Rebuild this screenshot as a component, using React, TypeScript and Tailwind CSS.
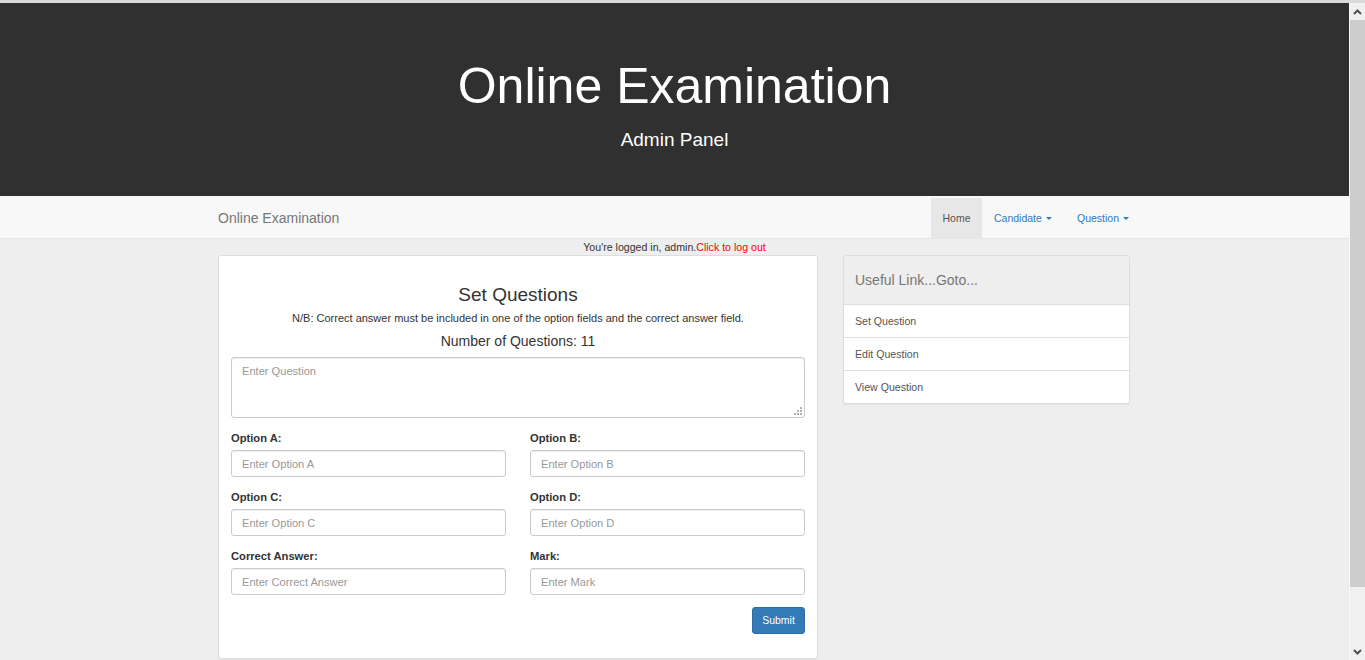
import React from "react";

function Caret() {
  return (
    <span className="ml-[1.5px] inline-block h-0 w-0 align-middle border-t-[3px] border-x-[3px] border-x-transparent border-t-[#337ab7]" />
  );
}

function Field({ label, placeholder }: { label: string; placeholder: string }) {
  return (
    <div className="flex flex-col">
      <label className="text-[11.2px] leading-[15px] font-bold text-[#333]">{label}</label>
      <input
        placeholder={placeholder}
        className="mt-[4px] h-[27px] w-full rounded-[3px] border border-[#ccc] bg-white px-[10px] text-[11.1px] text-[#555] outline-none placeholder:text-[#999] shadow-[inset_0_1px_1px_rgba(0,0,0,0.075)]"
      />
    </div>
  );
}

function ScrollArrow({ up }: { up: boolean }) {
  return (
    <div className="flex h-[17px] items-center justify-center">
      <svg width="9" height="6" viewBox="0 0 9 6">
        {up ? (
          <polyline points="1,5 4.5,1.5 8,5" fill="none" stroke="#505050" strokeWidth="2" />
        ) : (
          <polyline points="1,1 4.5,4.5 8,1" fill="none" stroke="#505050" strokeWidth="2" />
        )}
      </svg>
    </div>
  );
}

export default function App() {
  return (
    <div className="flex h-[660px] flex-col overflow-hidden bg-[#eeeeee] font-['Liberation_Sans',Arial,sans-serif]">
      <div className="h-[3px] bg-[#dadada]" />
      <div className="flex flex-1 min-h-0">
        <main className="flex-1 min-w-0">
          {/* Header */}
          <header className="flex h-[193px] flex-col items-center bg-[#303030] pt-[56px] text-white">
            <h1 className="text-[50px] leading-[55px] font-normal">Online Examination</h1>
            <p className="mt-[12px] text-[19px] leading-[27px]">Admin Panel</p>
          </header>

          {/* Navbar */}
          <nav className="h-[43px] border-b border-[#e7e7e7] bg-[#f8f8f8]">
            <div className="mx-auto flex w-[913px] items-start justify-between pt-[2px]">
              <span className="text-[14px] leading-[40px] text-[#777]">Online Examination</span>
              <ul className="-mr-[10px] flex h-[40px] text-[10.5px] leading-[15px]">
                <li className="flex w-[51px] items-center justify-center bg-[#e7e7e7] text-[#555]">Home</li>
                <li className="flex w-[83px] items-center pl-[12px] text-[#337ab7]">
                  Candidate&nbsp;<Caret />
                </li>
                <li className="flex w-[76px] items-center pl-[12px] text-[#337ab7]">
                  Question&nbsp;<Caret />
                </li>
              </ul>
            </div>
          </nav>

          {/* Logged in line */}
          <div className="text-center text-[10.6px] leading-[16px] text-[#333]">
            You're logged in, admin.<span className="text-[#ff0000]">Click to log out</span>
          </div>

          {/* Content */}
          <div className="mx-auto flex w-[913px] items-start gap-[25px]">
            <section className="w-[600px] rounded-[3px] border border-[#ddd] bg-white px-[12px] pt-[28px] pb-[24px] shadow-[0_1px_1px_rgba(0,0,0,0.05)]">
              <h3 className="text-center text-[19px] leading-[21px] text-[#333]">Set Questions</h3>
              <p className="mt-[6px] text-center text-[11px] leading-[15px] text-[#333]">
                N/B: Correct answer must be included in one of the option fields and the correct answer field.
              </p>
              <p className="mt-[5px] text-center text-[14px] leading-[20px] text-[#333]">Number of Questions: 11</p>
              <div className="relative mt-[6px]">
                <textarea
                  placeholder="Enter Question"
                  className="block h-[61px] w-full resize-none rounded-[3px] border border-[#ccc] bg-white px-[10px] pt-[6px] text-[11.1px] leading-[15px] text-[#555] outline-none placeholder:text-[#999] shadow-[inset_0_1px_1px_rgba(0,0,0,0.075)]"
                />
                <svg className="absolute right-[3px] bottom-[3px]" width="9" height="9" viewBox="0 0 9 9">
                  <rect x="7" y="1" width="2" height="2" fill="#b0b0b0" />
                  <rect x="4" y="4" width="2" height="2" fill="#b0b0b0" />
                  <rect x="7" y="4" width="2" height="2" fill="#b0b0b0" />
                  <rect x="1" y="7" width="2" height="2" fill="#b0b0b0" />
                  <rect x="4" y="7" width="2" height="2" fill="#b0b0b0" />
                  <rect x="7" y="7" width="2" height="2" fill="#b0b0b0" />
                </svg>
              </div>
              <div className="mt-[13px] grid grid-cols-2 gap-x-[24px] gap-y-[13px]">
                <Field label="Option A:" placeholder="Enter Option A" />
                <Field label="Option B:" placeholder="Enter Option B" />
                <Field label="Option C:" placeholder="Enter Option C" />
                <Field label="Option D:" placeholder="Enter Option D" />
                <Field label="Correct Answer:" placeholder="Enter Correct Answer" />
                <Field label="Mark:" placeholder="Enter Mark" />
              </div>
              <div className="mt-[12px] flex justify-end">
                <button className="h-[27px] w-[53px] rounded-[3px] border border-[#2e6da4] bg-[#337ab7] text-[10.5px] text-white">
                  Submit
                </button>
              </div>
            </section>

            <aside className="w-[287px] overflow-hidden rounded-[3px] border border-[#ddd] bg-white shadow-[0_1px_1px_rgba(0,0,0,0.05)]">
              <div className="h-[49px] border-b border-[#ddd] bg-[#eeeeee] px-[11px] pt-[14px] text-[14px] leading-[20px] text-[#777]">
                Useful Link...Goto...
              </div>
              <div className="flex h-[33px] items-center border-b border-[#ddd] px-[11px] pt-[1px] text-[10.6px] text-[#555]">Set Question</div>
              <div className="flex h-[33px] items-center border-b border-[#ddd] px-[11px] pt-[1px] text-[10.6px] text-[#555]">Edit Question</div>
              <div className="flex h-[32px] items-center px-[11px] pt-[1px] text-[10.6px] text-[#555]">View Question</div>
            </aside>
          </div>
        </main>

        {/* Fake scrollbar */}
        <div className="w-px bg-[#f7f7f7]" />
        <div className="flex w-[15px] flex-col bg-[#f0f0f0]">
          <ScrollArrow up />
          <div className="h-[567px] bg-[#cdcdcd]" />
          <div className="flex-1" />
          <ScrollArrow up={false} />
        </div>
      </div>
    </div>
  );
}
